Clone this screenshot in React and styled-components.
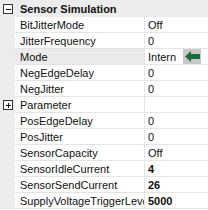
import React from "react";
import styled, { createGlobalStyle } from "styled-components";

const Global = createGlobalStyle`
  html, body { margin: 0; padding: 0; background: #fff; }
  body { font-family: "Liberation Sans", Arial, sans-serif; font-size: 11px; color: #111; }
`;

const Grid = styled.div`
  width: 208px;
  height: 210px;
  overflow: hidden;
  background: #fff;
  display: grid;
  grid-template-columns: 15px 130px 63px;
  grid-auto-rows: 16px;
  grid-template-rows: 17px;
`;

const Gutter = styled.div`
  background: #ececec;
  display: flex;
  align-items: center;
  justify-content: center;
`;

const Header = styled.div`
  grid-column: 2 / 4;
  background: #ececec;
  font-weight: bold;
  display: flex;
  align-items: center;
  padding-left: 5px;
  white-space: nowrap;
`;

const Name = styled.div`
  background: ${p => (p.$selected ? "#ebebeb" : "#fff")};
  border-bottom: 1px solid #e4e4e4;
  border-right: 1px solid #e4e4e4;
  padding-left: 5px;
  display: flex;
  align-items: center;
  white-space: nowrap;
  overflow: hidden;
`;

const Value = styled.div`
  min-width: 0;
  border-bottom: 1px solid #e4e4e4;
  padding-left: 3px;
  display: flex;
  align-items: center;
  font-weight: ${p => (p.$bold ? "bold" : "normal")};
  white-space: nowrap;
  overflow: hidden;
`;

const Toggle = styled.div`
  width: 8px;
  height: 8px;
  border: 1px solid #333;
  background: #fff;
  position: relative;
  &::before {
    content: "";
    position: absolute;
    left: 2px;
    top: 4px;
    width: 5px;
    height: 1px;
    background: #111;
  }
  ${p =>
    p.$plus &&
    `&::after {
      content: "";
      position: absolute;
      left: 4px;
      top: 2px;
      width: 1px;
      height: 5px;
      background: #111;
    }`}
`;

const ArrowBox = styled.div`
  flex: none;
  width: 18px;
  height: 15px;
  margin-left: auto;
  margin-right: 7px;
  background: #c9c9c9;
  display: flex;
  align-items: center;
  justify-content: center;
`;

const Arrow = () => (
  <ArrowBox>
    <svg width="15" height="11" viewBox="0 0 15 11">
      <path d="M0 5.5 L6 0 L6 3 L15 3 L15 8 L6 8 L6 11 Z" fill="#1d6a3c" />
    </svg>
  </ArrowBox>
);

const rows = [
  { name: "BitJitterMode", value: "Off" },
  { name: "JitterFrequency", value: "0" },
  { name: "Mode", value: "Intern", selected: true, arrow: true },
  { name: "NegEdgeDelay", value: "0" },
  { name: "NegJitter", value: "0" },
  { name: "Parameter", value: "", group: true },
  { name: "PosEdgeDelay", value: "0" },
  { name: "PosJitter", value: "0" },
  { name: "SensorCapacity", value: "Off" },
  { name: "SensorIdleCurrent", value: "4", bold: true },
  { name: "SensorSendCurrent", value: "26", bold: true },
  { name: "SupplyVoltageTriggerLevel", value: "5000", bold: true },
];

export default function App() {
  return (
    <>
      <Global />
      <Grid>
        <Gutter><Toggle /></Gutter>
        <Header>Sensor Simulation</Header>
        {rows.map(r => (
          <React.Fragment key={r.name}>
            <Gutter>{r.group && <Toggle $plus />}</Gutter>
            <Name $selected={r.selected}>{r.name}</Name>
            <Value $bold={r.bold}>
              <span>{r.value}</span>
              {r.arrow && <Arrow />}
            </Value>
          </React.Fragment>
        ))}
      </Grid>
    </>
  );
}
